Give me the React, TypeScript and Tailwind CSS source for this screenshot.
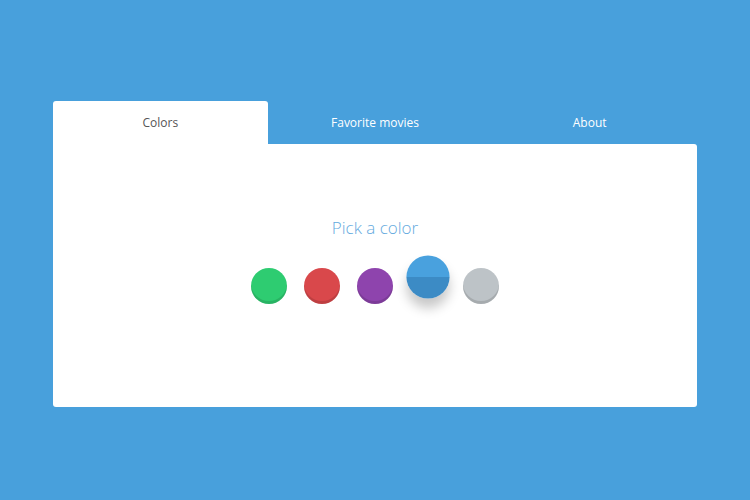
import React from 'react'

const tabs = ['Colors', 'Favorite movies', 'About'];

const swatches = [
  { name: 'green', className: 'bg-[#2ecc71]' },
  { name: 'red', className: 'bg-[#d9484b]' },
  { name: 'purple', className: 'bg-[#8e44ad]' },
  { name: 'blue', className: 'bg-[linear-gradient(to_bottom,#49a1de_50%,#3c8bc5_50%)] scale-[1.2] -translate-y-[9px] shadow-[0_8px_10px_rgba(0,0,0,0.22)]', active: true },
  { name: 'gray', className: 'bg-[#bdc3c7]' },
];

export default function App() {
  return (
    <div className="w-[750px] h-[500px] bg-[#48a0dc] px-[53px] pt-[101px] font-['Open_Sans',sans-serif]">
      <div className="grid grid-cols-3 h-[43px]">
        {tabs.map((tab, index) => (
          <div
            key={tab}
            className={
              index === 0
                ? 'flex items-center justify-center bg-white rounded-t-[3px] text-[12px] text-[#555]'
                : 'flex items-center justify-center text-[12px] text-white'
            }
          >
            {tab}
          </div>
        ))}
      </div>
      <div className="h-[263px] bg-white rounded-b-[3px] rounded-tr-[3px] flex flex-col items-center pt-[72px]">
        <h1 className="text-[17px] font-light text-[#64aade] leading-[24px]">Pick a color</h1>
        <div className="flex gap-[17px] mt-[28px]">
          {swatches.map((s) =>
            s.active ? (
              <div key={s.name} className={`w-[36px] h-[36px] rounded-full ${s.className}`} />
            ) : (
              <div
                key={s.name}
                className={`w-[36px] h-[36px] rounded-full shadow-[inset_0_-3px_0_rgba(0,0,0,0.12)] ${s.className}`}
              />
            )
          )}
        </div>
      </div>
    </div>
  );
}
